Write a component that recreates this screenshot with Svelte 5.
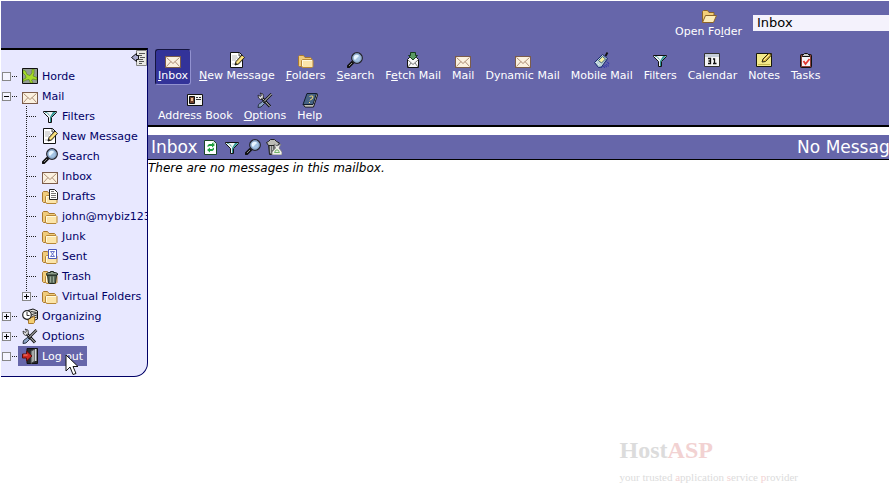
<script lang="ts">
  interface MenuItem {
    label: string;
    icon: string;
    key?: number; // index of the underlined access key
    active?: boolean;
  }

  interface TreeNode {
    label: string;
    icon: string;
    state?: "open" | "closed" | "leaf";
    selected?: boolean;
    children?: TreeNode[];
  }

  const menu: MenuItem[] = [
    { label: "Inbox", icon: "mail", key: 0, active: true },
    { label: "New Message", icon: "compose", key: 0 },
    { label: "Folders", icon: "folder", key: 0 },
    { label: "Search", icon: "search", key: 0 },
    { label: "Fetch Mail", icon: "fetch", key: 1 },
    { label: "Mail", icon: "mail" },
    { label: "Dynamic Mail", icon: "mail" },
    { label: "Mobile Mail", icon: "mobile" },
    { label: "Filters", icon: "filter" },
    { label: "Calendar", icon: "calendar" },
    { label: "Notes", icon: "notes" },
    { label: "Tasks", icon: "tasks" },
    { label: "Address Book", icon: "contacts" },
    { label: "Options", icon: "options", key: 0 },
    { label: "Help", icon: "help" },
  ];

  const tree: TreeNode[] = [
    { label: "Horde", icon: "horde", state: "leaf" },
    {
      label: "Mail",
      icon: "mail",
      state: "open",
      children: [
        { label: "Filters", icon: "filter" },
        { label: "New Message", icon: "compose" },
        { label: "Search", icon: "search" },
        { label: "Inbox", icon: "mail" },
        { label: "Drafts", icon: "drafts" },
        { label: "john@mybiz123", icon: "folder" },
        { label: "Junk", icon: "folder" },
        { label: "Sent", icon: "sent" },
        { label: "Trash", icon: "trashfolder" },
        { label: "Virtual Folders", icon: "folder", state: "closed" },
      ],
    },
    { label: "Organizing", icon: "organizing", state: "closed" },
    { label: "Options", icon: "options", state: "closed" },
    { label: "Log out", icon: "logout", state: "leaf", selected: true },
  ];

  const actions = [
    { label: "Refresh", icon: "refresh" },
    { label: "Apply filters", icon: "filter" },
    { label: "Search", icon: "search" },
    { label: "Empty folder", icon: "empty" },
  ];

  let folder = $state("Inbox");
</script>

{#snippet folderShape()}
  <path d="M.5 13.500v-9l1-1h4l1.500 2h5.500l1 1v7l-1 1h-11z" fill="#f0cc7c" stroke="#a87830" />
  <path d="M3.500 14V8.500l1-1h9.500l1 1v6l-1 1H4.500z" fill="#fbe5aa" stroke="#b88838" />
  <path d="M4.500 14V8.500h9.500" fill="none" stroke="#fff9df" />
{/snippet}

{#snippet icon(name: string)}
  <svg class="icon" viewBox="0 0 16 16" aria-hidden="true">
    {#if name === "mail"}
      <rect x="0.5" y="4.5" width="15" height="11" fill="#fbf1df" stroke="#7c5c4a" />
      <path d="M1.500 5.500l6.500 6 6.500-6M1.500 14.500l4.500-5M14.500 14.500l-4.500-5" fill="none" stroke="#b09078" />
    {:else if name === "compose"}
      <path d="M1.500.5h9l3 3v12h-12z" fill="#fff" stroke="#111" />
      <path d="M3 4h5M3 6h6M3 8h4M3 12h7" stroke="#b9b9b9" />
      <path d="M10 1v3h3" fill="#ccc" stroke="#555" />
      <path d="M6 13l1-3.500 6-6.500 2.500 2.500-6 6.500z" fill="#efcf62" stroke="#222" />
      <path d="M6 13l1-2 1 1z" fill="#000" />
      <path d="M8 11l6-6.500" stroke="#fff2a6" />
    {:else if name === "folder"}
      {@render folderShape()}
    {:else if name === "openfolder"}
      <path d="M1.500 14.500V3.500l1-1h4l1.500 2h5v3" fill="#f3cf78" stroke="#8c6428" />
      <path d="M1.500 14.500L4.500 7.500h11l-3 7z" fill="#fdedb8" stroke="#8c6428" />
    {:else if name === "drafts"}
      {@render folderShape()}
      <path d="M7.500 1.500h5l3 3v7h-8z" fill="#fff" stroke="#222" />
      <path d="M9 3.500h3M9 5.500h5M9 7.500h5M9 9.500h5" stroke="#777" />
    {:else if name === "sent"}
      {@render folderShape()}
      <path d="M6.500 1.500h8v9h-8z" fill="#fff" stroke="#4c58b8" />
      <path d="M8.500 3.500l4 5M12.500 3.500l-4 5M8.500 3.500h4M8.500 8.500h4" fill="none" stroke="#6874cc" />
    {:else if name === "trashfolder"}
      {@render folderShape()}
      <path d="M5.500 7h9l-1 8-1 .5h-5l-1-.5z" fill="#5c6c5c" stroke="#1f281f" />
      <path d="M4.500 6.500V5.500l2-1h2v-1h3v1h2l2 1v1.500h-11z" fill="#8c9c8a" stroke="#1f281f" />
      <path d="M8.500 8.500v6M11.500 8.500v6" stroke="#9aaa98" />
    {:else if name === "search"}
      <path d="M5.500 10.500l-4 4" stroke="#111" stroke-width="3.500" stroke-linecap="round" />
      <path d="M5 11l-3 3" stroke="#8d8d8d" />
      <circle cx="10" cy="6" r="5.300" fill="#a4c4e4" stroke="#25252d" stroke-width="1.300" />
      <circle cx="10" cy="6" r="4.200" fill="none" stroke="#7890b0" stroke-width="0.800" />
      <path d="M7 7a3 3 0 0 1 4-4l1 1-4 4z" fill="#e8f5ff" />
    {:else if name === "filter"}
      <path d="M1.500 3.500h13v1L9.500 9.500v5h-3v-5L1.500 4.500z" fill="#eef4f4" stroke="#111" />
      <path d="M11 4h3l-5 5.500v4.500H8V9z" fill="#2f9492" />
      <path d="M3 4.500h2l2.500 3" fill="none" stroke="#61a8a6" />
    {:else if name === "fetch"}
      <path d="M2.500 7.500l2-2h7l2 2v8h-11z" fill="#f8f8f8" stroke="#111" />
      <path d="M3 8l5 4.500L13 8M3 15l3-4M13 15l-3-4" stroke="#777" fill="none" />
      <path d="M5.500.500h5v3h2L8 8 3.500 3.500h2z" fill="#5a9a63" stroke="#173f1e" />
    {:else if name === "mobile"}
      <path d="M7 15.500l8-4M10 15.500l5-2M11 7l4 5" fill="none" stroke="#3439a7" stroke-width="1.500" stroke-dasharray="1 1" />
      <path d="M.500 10.500l8-8 5 4-6 8.500-3 .5z" fill="#b4cfd4" stroke="#17266d" />
      <path d="M4.500 8.500l4-4 3 2.500-4 4z" fill="#f4efa0" stroke="#3c5e79" />
      <path d="M11.500 4l2-3.500" stroke="#111" stroke-width="1.800" />
      <path d="M2.500 10.500l3 3M4 9.500l3 3" stroke="#fff" stroke-dasharray="1 1" />
    {:else if name === "calendar"}
      <path d="M.5 1.500h15v13H.5z" fill="#f5f5f5" stroke="#333" />
      <path d="M1 2h14v3H1z" fill="#c5cdd8" />
      <path d="M4 6.500h2.500v5H4M4.500 9h2M9 7h1.500v5M9 11.500h3.500" fill="none" stroke="#111" stroke-width="1.300" />
    {:else if name === "notes"}
      <path d="M.5 1.500h15v13H.5z" fill="#f3e98a" stroke="#17170b" />
      <path d="M2 12.500h12" stroke="#c5b650" />
      <path d="M6 10l1-3 6-6 2.500 2-6 6.500z" fill="#dfba42" stroke="#302810" />
      <path d="M8 8l5-5" stroke="#fff2a6" />
    {:else if name === "tasks"}
      <rect x="2.500" y="2.500" width="11" height="13" rx="1" fill="#8a4038" stroke="#111" />
      <path d="M4 5h8v9H4z" fill="#f4f4f8" />
      <path d="M4.500 4.500v-1l2-2h3l2 2v1z" fill="#c8c8c8" stroke="#111" />
      <path d="M5.500 9l2 3 4-5" fill="none" stroke="#e1372f" stroke-width="1.800" />
    {:else if name === "contacts"}
      <path d="M.5 2.500h15v11H.5z" fill="#f7f7f2" stroke="#111" />
      <path d="M2.500 4.500h5v7h-5z" fill="#70402a" stroke="#111" />
      <path d="M4 6h2v3H4z" fill="#e9bc92" />
      <path d="M9 5.500h2M12 5.500h2M9 7.500h5" stroke="#333" />
    {:else if name === "options"}
      <path d="M4 5l9 9.500" stroke="#111" stroke-width="3" />
      <path d="M4 5l9 9.500" stroke="#e4e4e4" />
      <path d="M14.500 2L6 10.500" stroke="#111" stroke-width="2.500" />
      <path d="M14.500 2L7 9.500" stroke="#eee" />
      <path d="M3 1l1.500 2L3.500 4.500 1 3l.5 3 2 1.500 3-2-.5-3.500z" fill="#d8d8d8" stroke="#111" stroke-width="0.700" />
      <path d="M5.500 9.500l2 2-3.500 3.500-3 .5.500-3z" fill="#8ba3c4" stroke="#273241" />
    {:else if name === "help"}
      <path d="M1 12l2 3h8.500l4-12-1-2" fill="#e7e8dd" stroke="#111" />
      <path d="M5 1.500h9.500l-3.500 11H1z" fill="#456284" stroke="#111b2b" />
      <path d="M3 14h8" stroke="#999" />
      <path d="M7.500 5l1-1h2l.5 1-1 2-1.500.5-.5 1M7.500 10v1" stroke="#f6da76" fill="none" />
    {:else if name === "horde"}
      <path d="M.5.500h15v15H.5z" fill="#939c93" />
      <path d="M1 2l2.500 1L5 6.500l3 1L10 5V1.500l2-.5v4.500l-1 2.500 4 1.500v2.500l-4-1-1.500 1 1.500 3H8.500L7 11.500l-3 .5-3 1.500v-2L4 10l-.5-2.500L1 5z" fill="#a8dc28" stroke="#5c8c18" stroke-width="0.700" />
      <path d="M.5.500h15v15H.5z" fill="none" stroke="#111" />
    {:else if name === "organizing"}
      <path d="M6 2.500l5-1.500 4.500 2v8l-7 3-4-3z" fill="#e6e6df" stroke="#111" />
      <path d="M9 3.500l5.500 1M10 6.500l5-1.500M10 8.500l5-1.500M10 10.500l5-1.500" stroke="#333" />
      <path d="M6.500 10.500l6-2v6l-1 1h-5z" fill="#f3ce72" stroke="#a87830" />
      <circle cx="5" cy="7" r="4.300" fill="#fff" stroke="#222" stroke-width="1.200" />
      <path d="M5 4v3.500h2.500" stroke="#333" fill="none" />
    {:else if name === "logout"}
      <path d="M5 .5h10.500v15H5z" fill="#26282a" stroke="#111" />
      <path d="M9 3l4-2v12l-4 2.500z" fill="#a5aaa8" stroke="#444" />
      <path d="M13 1h1.500v12H13z" fill="#d8dddb" />
      <path d="M.5 6h4V3l5.500 5-5.500 5v-3h-4z" fill="#d02820" stroke="#5c100c" />
      <path d="M1.500 7h4" stroke="#ff8b7b" />
    {:else if name === "refresh"}
      <path d="M1.500 1.500h9l3 3v11h-12z" fill="#fff" stroke="#184728" />
      <path d="M10 2v3h3" fill="#bcd8c3" />
      <path d="M4.500 8V6.500L6 5h3v-1.500l3 2.500-3 2.500V7H6.500zM11 8.500v2L9.500 12H7v1.500L4 11l3-2.500V10h2z" fill="#1fa03f" />
    {:else if name === "empty"}
      <path d="M2.500 5.500h8l-1 10h-6z" fill="#6a6c69" stroke="#222" />
      <path d="M.5 3.500l2-1 2-2h4l2 2 3 1.500-2 2.500h-9z" fill="#bdbdb7" stroke="#222" />
      <path d="M4.500 7v7M6.500 7v4" stroke="#bbb" />
      <path d="M8 5l3 2 4-2-2 4 3 4v3H6v-3l3.500-4z" fill="#f1f1ec" stroke="#777" stroke-width="0.800" />
      <path d="M8.500 13.500l1.500-2.500h2l1.500 2.500z" fill="none" stroke="#72b568" />
    {/if}
  </svg>
{/snippet}

{#snippet keyLabel(label: string, key?: number)}
  <span class="label">{#if key === undefined}{label}{:else}{label.slice(0, key)}<u>{label[key]}</u>{label.slice(key + 1)}{/if}</span>
{/snippet}

{#snippet branch(nodes: TreeNode[])}
  {#each nodes as node}
    <li>
      <div class="row">
        {#if node.state}
          <button class="toggle {node.state}" aria-label="Toggle {node.label}"></button>
        {:else}
          <span class="joint"></span>
        {/if}
        <span class="dots"></span>
        <a class="node" class:selected={node.selected} href="#{node.icon}">
          {@render icon(node.icon)}
          <span>{node.label}</span>
          {#if node.selected}
            <svg class="pointer" viewBox="0 0 14 22" aria-hidden="true">
              <path d="M1 1v16l4-4 3 7.500 3-1-3-7h5z" fill="#fff" stroke="#111" />
            </svg>
          {/if}
        </a>
      </div>
      {#if node.children}
        <ul class="children">{@render branch(node.children)}</ul>
      {/if}
    </li>
  {/each}
{/snippet}

<div class="page">
  <div class="shell">
    <header>
      <a class="menu-item" href="#open">
        {@render icon("openfolder")}
        {@render keyLabel("Open Folder", 7)}
      </a>
      <select aria-label="Open Folder" bind:value={folder}>
        <option>Inbox</option>
        <option>Drafts</option>
        <option>Sent</option>
        <option>Trash</option>
      </select>
    </header>

    <div class="body">
      <aside>
        <button class="collapse" aria-label="Hide sidebar">
          <svg viewBox="0 0 16 16" aria-hidden="true">
            <path d="M5.500.500h10v15h-10z" fill="#e8e8e4" stroke="#858585" />
            <path d="M8 3.500h6M7 5.500h4M9 7.500h5M8 9.500h4M8 11.500h5M8 13.500h3" stroke="#555" />
            <path d="M.5 7.500l5-4v2h2v4h-2v2z" fill="#a7a7cd" stroke="#111" />
          </svg>
        </button>
        <ul>{@render branch(tree)}</ul>
      </aside>

      <main>
        <nav>
          {#each menu as item}
            <a class="menu-item" class:active={item.active} href="#{item.icon}">
              {@render icon(item.icon)}
              {@render keyLabel(item.label, item.key)}
            </a>
          {/each}
        </nav>

        <div class="title-bar">
          <h1>Inbox</h1>
          {#each actions as action}
            <button class="action" aria-label={action.label}>{@render icon(action.icon)}</button>
          {/each}
          <span class="count">No Messages</span>
        </div>
        <p class="notice">There are no messages in this mailbox.</p>

        <div class="brand">
          <div class="brand-name">Host<b>ASP</b></div>
          <div class="tagline">your trusted <b>a</b>pplication <b>s</b>ervice <b>p</b>rovider</div>
        </div>
      </main>
    </div>
  </div>
</div>

<style>
  :global(body) {
    background: #fff;
    overflow: hidden;
  }

  .page {
    min-height: 100vh;
    box-sizing: border-box;
    padding: 1px 0 0 1px;
    overflow: hidden;
    display: flex;
    font-family: "DejaVu Sans", Verdana, sans-serif;
    font-size: 11px;
  }

  /* the frame runs a little past the window's right edge */
  .shell {
    flex: none;
    width: calc(100% + 24px);
    display: flex;
    flex-direction: column;
  }

  a {
    color: inherit;
    text-decoration: none;
  }

  button {
    padding: 0;
    border: none;
    background: none;
    cursor: pointer;
  }

  ul {
    list-style: none;
    margin: 0;
    padding: 0;
  }

  .icon {
    flex: none;
    display: block;
    width: 16px;
    height: 16px;
  }

  header {
    display: flex;
    justify-content: flex-end;
    align-items: flex-start;
    gap: 8px;
    height: 47px;
    padding-top: 4px;
    box-sizing: border-box;
    background: #6666aa;
  }

  select {
    appearance: none;
    width: 160px;
    height: 16px;
    margin-top: 10px;
    padding: 0 4px;
    border: none;
    border-radius: 0;
    background: #f4f2fc;
    color: #000;
    font-family: inherit;
    font-size: 13px;
    line-height: 16px;
  }

  .menu-item {
    display: flex;
    flex-direction: column;
    align-items: center;
    padding: 2px 2px 0;
    border: 1px solid transparent;
    border-radius: 3px;
    color: #fff;
    line-height: 16px;
    white-space: nowrap;
  }

  .menu-item.active {
    background: #333399;
    border-color: #151540 #9292d0 #9292d0 #151540;
  }

  .body {
    flex: 1;
    display: flex;
  }

  aside {
    position: relative;
    align-self: flex-start;
    flex: none;
    width: 147px;
    box-sizing: border-box;
    padding: 16px 0 10px;
    border-top: 2px solid #000;
    border-right: 1px solid #000066;
    border-bottom: 1px solid #000066;
    border-bottom-right-radius: 14px;
    background: #e8e8ff;
    color: #000066;
    overflow: hidden;
  }

  .collapse {
    position: absolute;
    top: 0;
    right: 0;
    width: 16px;
    height: 16px;
  }

  .collapse svg {
    display: block;
  }

  .row {
    display: flex;
    align-items: center;
    height: 20px;
    padding-left: 1px;
  }

  .toggle,
  .joint {
    position: relative;
    flex: none;
    width: 9px;
    height: 9px;
    box-sizing: border-box;
  }

  .toggle {
    border: 1px solid #888;
    background: #f4f4ff;
  }

  .open::before,
  .closed::before,
  .closed::after {
    content: "";
    position: absolute;
    background: #000;
  }

  .open::before,
  .closed::before {
    left: 1px;
    top: 3px;
    width: 5px;
    height: 1px;
  }

  .closed::after {
    left: 3px;
    top: 1px;
    width: 1px;
    height: 5px;
  }

  .dots {
    flex: none;
    width: 7px;
    height: 1px;
    background: repeating-linear-gradient(to right, transparent 0 1px, #222 1px 2px);
  }

  .joint {
    width: 4px;
  }

  .joint + .dots {
    width: 11px;
    margin-right: 1px;
  }

  .node {
    position: relative;
    display: flex;
    align-items: center;
    gap: 4px;
    height: 20px;
    padding: 0 4px;
    line-height: 20px;
    white-space: nowrap;
  }

  .node span {
    padding-top: 2px;
  }

  .selected {
    background: #6666aa;
    color: #fff;
  }

  .pointer {
    position: absolute;
    left: 47px;
    top: 8px;
    width: 14px;
    height: 22px;
  }

  .children {
    padding-left: 20px;
    background: repeating-linear-gradient(to bottom, #222 0 1px, transparent 1px 2px) 25px 0 / 1px calc(100% - 14px) no-repeat;
  }

  main {
    flex: 1;
    min-width: 0;
    display: flex;
    flex-direction: column;
  }

  nav {
    display: flex;
    flex-wrap: wrap;
    gap: 4px 5px;
    padding: 1px 60px 0 7px;
    background: #6666aa;
    border-bottom: 2px solid #000;
  }

  .title-bar {
    display: flex;
    align-items: center;
    gap: 5px;
    height: 24px;
    margin-top: 8px;
    padding: 0 4px 0 3px;
    background: #6666aa;
    border-bottom: 1px solid #000;
    color: #fff;
    font-size: 17px;
    white-space: nowrap;
  }

  h1 {
    margin: 0;
    font-size: inherit;
    font-weight: normal;
  }

  .count {
    margin-left: auto;
  }

  .notice {
    margin: 0;
    color: #000;
    font-size: 12px;
    font-style: italic;
    line-height: 16px;
  }

  .brand {
    align-self: flex-end;
    margin: auto 115px 15px 0;
    color: #dcdcdc;
    font-family: "Liberation Serif", serif;
    font-size: 11px;
    line-height: 16px;
  }

  .brand b {
    color: #f2d2d2;
    font-weight: inherit;
  }

  .brand-name {
    font-size: 24px;
    font-weight: bold;
    line-height: 38px;
  }
</style>
